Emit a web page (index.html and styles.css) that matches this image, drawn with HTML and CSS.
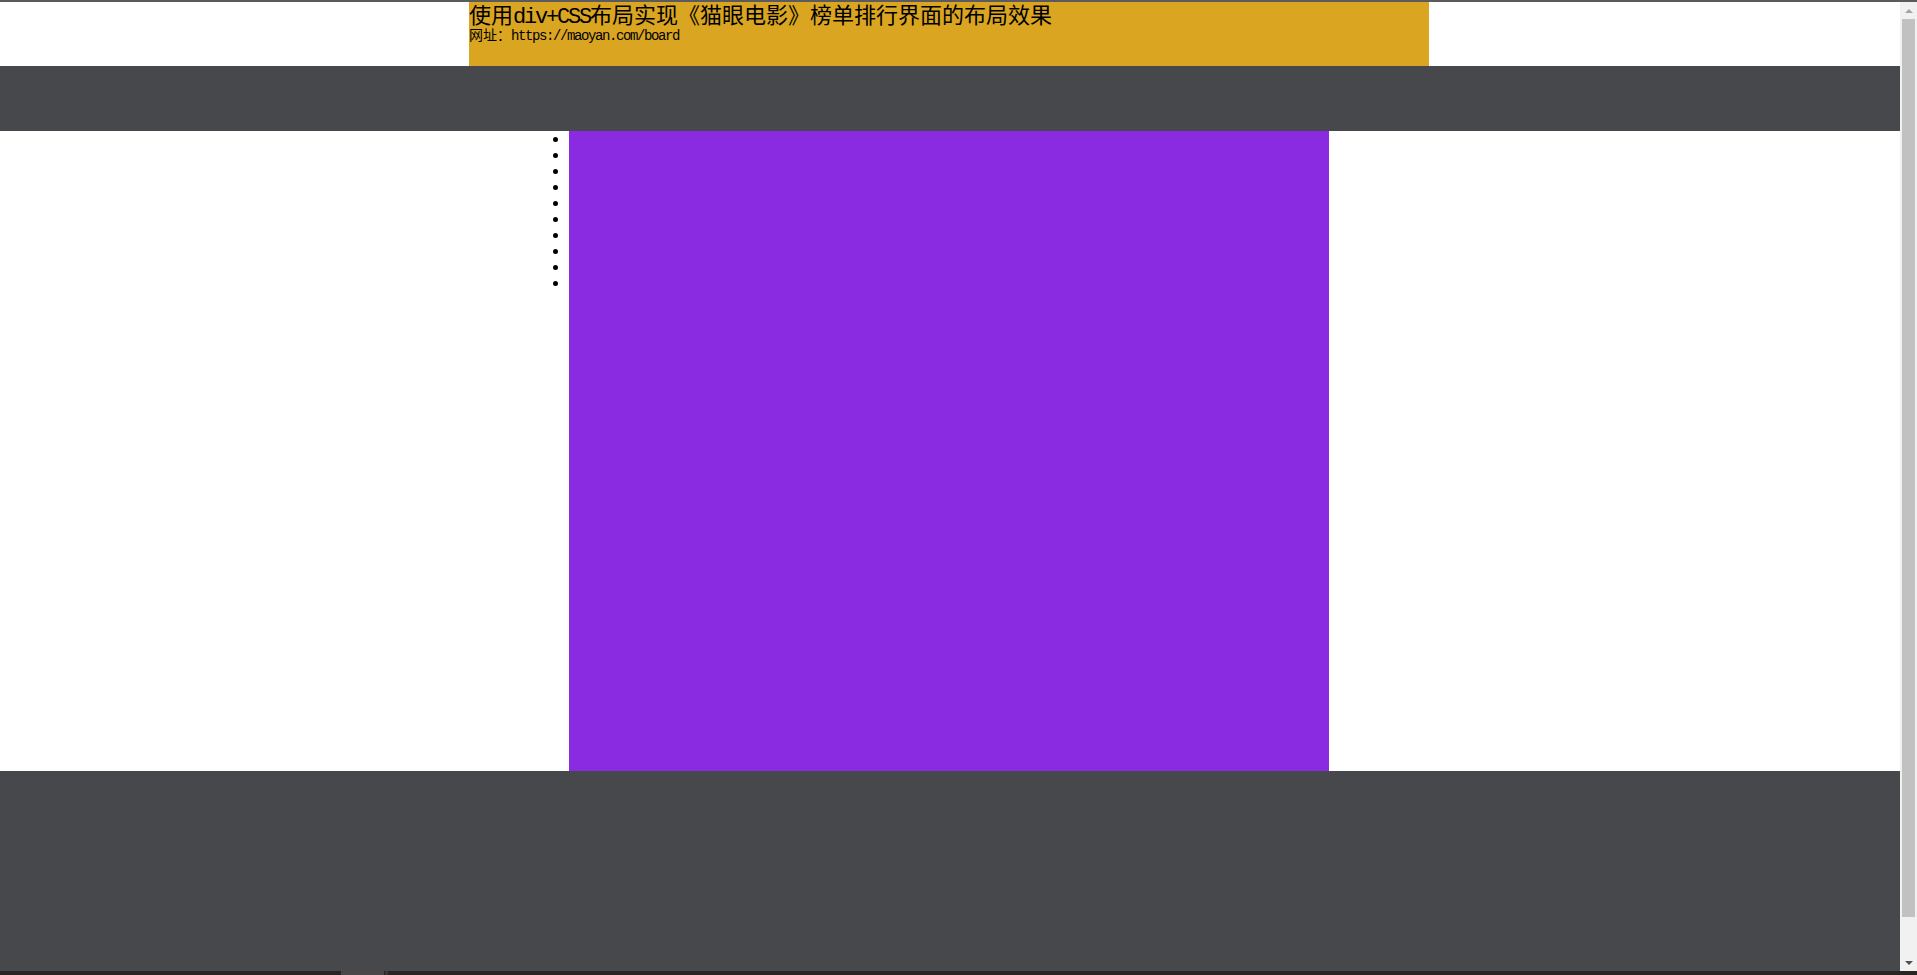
FILE: index.html
```html
<!DOCTYPE html>
<html lang="zh-CN">
<head>
<meta charset="utf-8">
<title>猫眼电影 榜单</title>
<link rel="stylesheet" href="styles.css">
</head>
<body>
<div class="topline"></div>
<div class="viewport">
  <div class="page">
    <div class="row">
      <header class="banner">
        <h1 class="title">使用<span class="lat">div+CSS</span>布局实现《猫眼电影》榜单排行界面的布局效果</h1>
        <p class="url">网址：<span class="lat">https://maoyan.com/board</span></p>
      </header>
    </div>
    <nav class="nav"></nav>
    <div class="row">
      <main class="main">
        <ul class="list">
          <li></li><li></li><li></li><li></li><li></li>
          <li></li><li></li><li></li><li></li><li></li>
        </ul>
      </main>
    </div>
    <footer class="footer"></footer>
  </div>
  <div class="scrollbar">
    <div class="sb-btn"><span class="arrow-up"></span></div>
    <div class="sb-track"><div class="sb-thumb"></div></div>
    <div class="sb-btn"><span class="arrow-down"></span></div>
  </div>
</div>
<div class="taskbar">
  <div class="tb-gap"></div>
  <div class="tb-item"></div>
  <div class="tb-sep"></div>
</div>
</body>
</html>
```

FILE: styles.css
```css
html, body {
  margin: 0;
  padding: 0;
  height: 100%;
  overflow: hidden;
  background: #ffffff;
}

body {
  display: flex;
  flex-direction: column;
  font-family: "Noto Sans CJK SC", "Liberation Serif", serif;
  color: #000;
}

.topline {
  height: 2px;
  flex: none;
  background: #5b5b5d;
}

.viewport {
  flex: 1;
  display: flex;
  min-height: 0;
}

.page {
  flex: 1;
  overflow: hidden;
  background: #fff;
}

.row {
  padding-right: 2px;
}

.banner {
  width: 960px;
  height: 64px;
  margin: 0 auto;
  background: #daa520;
}

.title {
  margin: 0;
  font-size: 22px;
  font-weight: normal;
  line-height: 22px;
  white-space: nowrap;
}

.url {
  margin: 0;
  font-size: 14px;
  line-height: 20px;
  white-space: nowrap;
}

.lat {
  font-family: "Liberation Mono", monospace;
  letter-spacing: -0.1em;
  line-height: 0.6;
}

.nav {
  height: 65px;
  background: #47484c;
}

.main {
  width: 760px;
  height: 640px;
  margin: 0 auto;
  background: #8a2be2;
}

.list {
  margin: 0;
  padding: 0;
  font-family: "Liberation Serif", serif;
  font-size: 16px;
  line-height: 16px;
  list-style: disc outside;
}

.list li {
  height: 16px;
}

.footer {
  height: 220px;
  background: #47484c;
}

.scrollbar {
  width: 17px;
  flex: none;
  display: flex;
  flex-direction: column;
  background: #f1f1f1;
}

.sb-btn {
  height: 17px;
  flex: none;
  display: flex;
  align-items: center;
  justify-content: center;
}

.arrow-up {
  width: 0;
  height: 0;
  border-left: 4px solid transparent;
  border-right: 4px solid transparent;
  border-bottom: 4px solid #a3a3a3;
}

.arrow-down {
  width: 0;
  height: 0;
  border-left: 4px solid transparent;
  border-right: 4px solid transparent;
  border-top: 4px solid #505050;
}

.sb-track {
  flex: 1;
  display: flex;
  flex-direction: column;
}

.sb-thumb {
  height: 898px;
  margin: 0 2px;
  background: #c1c1c1;
}

.taskbar {
  height: 4px;
  flex: none;
  display: flex;
  background: #2a2522;
}

.tb-gap {
  width: 341px;
}

.tb-item {
  width: 43px;
  background: #4b4947;
}

.tb-sep {
  width: 3px;
  margin-left: 1px;
  background: #3b3937;
}
```
